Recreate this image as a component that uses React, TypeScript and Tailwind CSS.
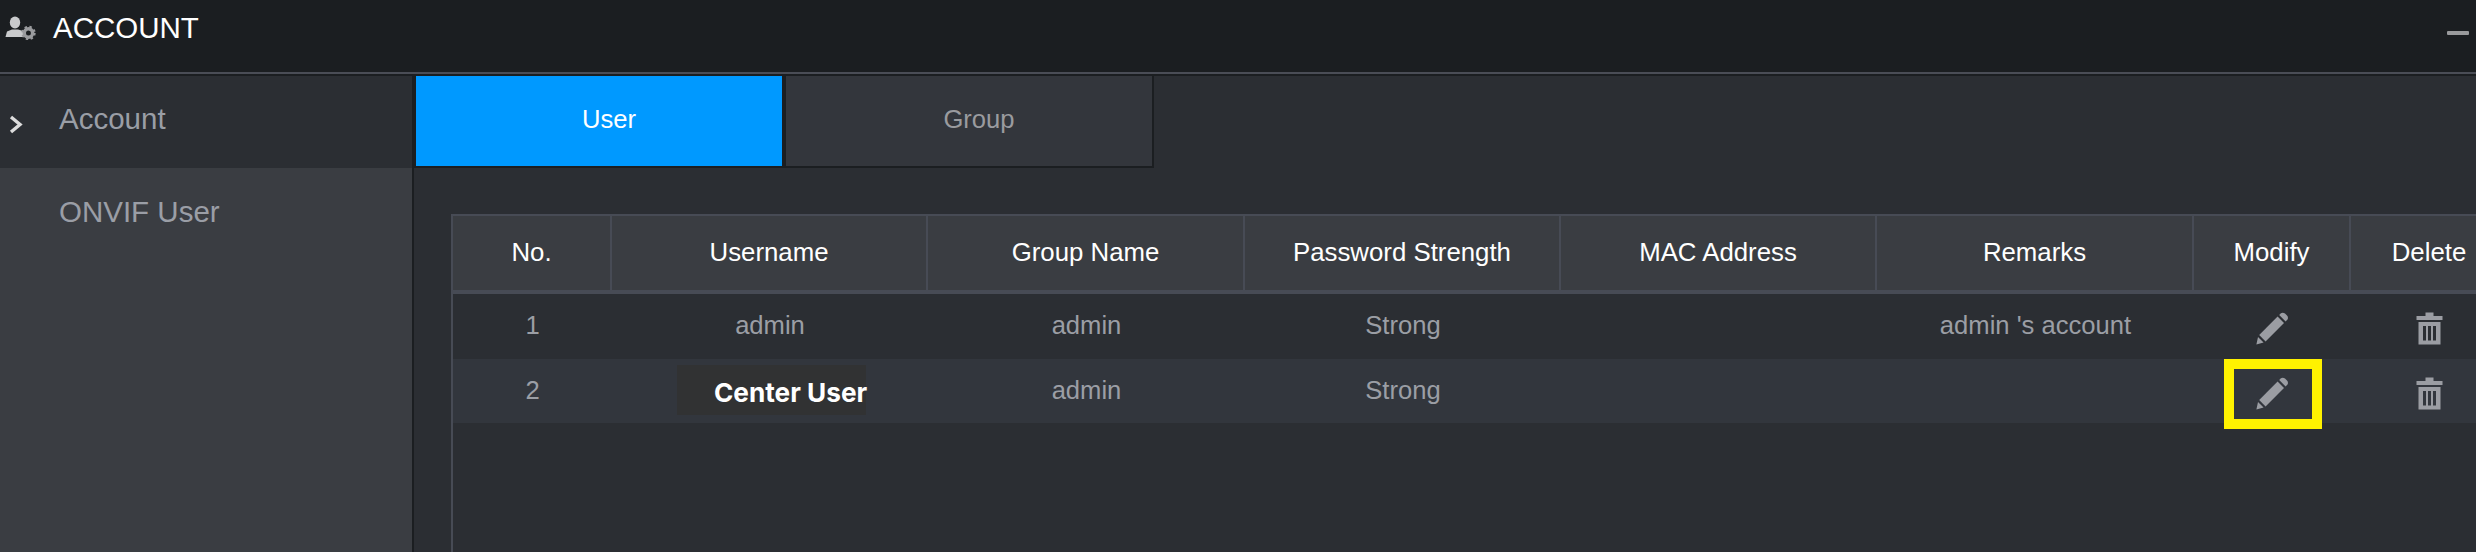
// @ts-nocheck
const COLS = "grid grid-cols-[159px_316px_317px_316px_316px_317px_157px_156px]";

const HEADERS = ["No.", "Username", "Group Name", "Password Strength", "MAC Address", "Remarks", "Modify", "Delete"];

function PencilIcon() {
    return (
        <svg width="33" height="33" viewBox="0 0 33 33" fill="#9b9da3">
            <path d="M24.6 1.6 C25.8 0.4 27.6 0.4 29 1.6 L31 3.6 C32.3 5 32.3 6.8 31 8 L29.6 9.4 L23.2 3 Z" />
            <path d="M21.6 4.6 L28 11 L9.6 29.4 L3.2 23 Z" />
            <path d="M2 25 L7.6 30.6 L0.4 32.6 Z" />
        </svg>
    );
}

function TrashIcon() {
    return (
        <svg width="27" height="33" viewBox="0 0 27 33" fill="#9b9da3">
            <path d="M9.5 0.5 H17.5 V4 H26.5 V8 H0.5 V4 H9.5 Z" />
            <path fillRule="evenodd" d="M2.5 10 H24.5 V32.5 H2.5 Z M7 14 V28.5 H10 V14 Z M12 14 V28.5 H15 V14 Z M17 14 V28.5 H20 V14 Z" />
        </svg>
    );
}

function AccountIcon() {
    return (
        <svg width="32" height="24" viewBox="0 0 32 24" fill="#c9cacc">
            <ellipse cx="10" cy="6.5" rx="5.2" ry="6" />
            <path d="M0.5 21 L2 15.5 L7 13.5 H13 L18 15 L18 21 Z" />
            <circle cx="23.5" cy="17" r="4.2" fill="none" stroke="#9a9b9e" strokeWidth="3.4" />
            <circle cx="23.5" cy="17" r="6.2" fill="none" stroke="#9a9b9e" strokeWidth="2" strokeDasharray="2.4 2.5" />
        </svg>
    );
}

function Row({ no, user, group, strength, remarks, className }) {
    return (
        <div className={`${COLS} h-[64px] items-center text-center text-[25.6px] text-[#9b9ea5] ${className}`}>
            <div className="pb-[1px]">{no}</div>
            <div className="pb-[1px]">{user}</div>
            <div className="pb-[1px]">{group}</div>
            <div className="pb-[1px]">{strength}</div>
            <div></div>
            <div className="pb-[1px]">{remarks}</div>
            <div className="flex justify-center pt-[5px]"><PencilIcon /></div>
            <div className="flex justify-center pt-[5px]"><TrashIcon /></div>
        </div>
    );
}

export default function App() {
    return (
        <div className="relative flex h-[552px] w-[2476px] flex-col overflow-hidden bg-[#1b1e21] font-['Liberation_Sans',Arial,sans-serif]">
            <header className="flex h-[74px] shrink-0 items-start border-b-2 border-[#4a4d56] bg-[#1b1e21]">
                <div className="flex h-[56px] w-full items-center pl-[5px] pr-[7px]">
                    <AccountIcon />
                    <span className="ml-[16px] text-[29.5px] text-white">ACCOUNT</span>
                    <div className="ml-auto mt-[10px] h-[4px] w-[22px] rounded-[1px] bg-[#999a9c]"></div>
                </div>
            </header>

            <div className="flex min-h-0 flex-1 pt-[2px]">
                <aside className="flex w-[412px] shrink-0 flex-col text-[29.5px] text-[#9a9ea6]">
                    <div className="flex h-[92px] items-center bg-[#2b2e33] pb-[5px]">
                        <svg className="ml-[9px] mt-[10px]" width="14" height="19" viewBox="0 0 14 19" fill="none" stroke="#dcdcdc" strokeWidth="3.4">
                            <path d="M2 2 L11 9.5 L2 17" />
                        </svg>
                        <span className="ml-[36px]">Account</span>
                    </div>
                    <div className="flex-1 bg-[#3a3d42] pl-[59px] pt-[27px] leading-[34px]">ONVIF User</div>
                </aside>

                <main className="ml-[2px] min-w-0 flex-1 bg-[#2b2e33]">
                    <div className="flex h-[92px] w-[740px] border-x-2 border-b-2 border-[#1b1e21] bg-[#1b1e21]">
                        <div className="flex w-[366px] items-center justify-center bg-[#0099ff] pb-[4px] pl-[20px] text-[25.6px] text-white">User</div>
                        <div className="ml-[4px] flex w-[366px] items-center justify-center bg-[#33363c] pb-[4px] pl-[20px] text-[25.6px] text-[#9a9b9f]">Group</div>
                    </div>

                    <div className="ml-[37px] mt-[46px] h-[400px] w-[2055px] border-l-2 border-t-2 border-[#474b55]">
                        <div className={`${COLS} h-[78px] border-b-4 border-[#474b55] bg-[#3a3d42] text-center text-[25.8px] text-white`}>
                            {HEADERS.map((h, i) => (
                                <div key={h} className={`flex items-center justify-center pb-[1px] ${i < 7 ? "border-r-2 border-[#474b55]" : ""}`}>{h}</div>
                            ))}
                        </div>
                        <Row no="1" user="admin" group="admin" strength="Strong" remarks="admin 's account" className="" />
                        <div className="relative">
                            <Row no="2" user="" group="admin" strength="Strong" remarks="" className="mt-[1px] bg-[#32363d]" />
                            <div className="absolute left-[224px] top-[6px] flex h-[50px] w-[189px] items-center bg-[#313233] pl-[37px] pt-[5px]">
                                <span className="whitespace-nowrap font-['Inter',sans-serif] text-[26.2px] font-bold text-white">Center User</span>
                            </div>
                            <div className="absolute left-[1771px] top-0 h-[70px] w-[98px] border-[10px] border-[#fff200]"></div>
                        </div>
                    </div>
                </main>
            </div>
        </div>
    );
}
